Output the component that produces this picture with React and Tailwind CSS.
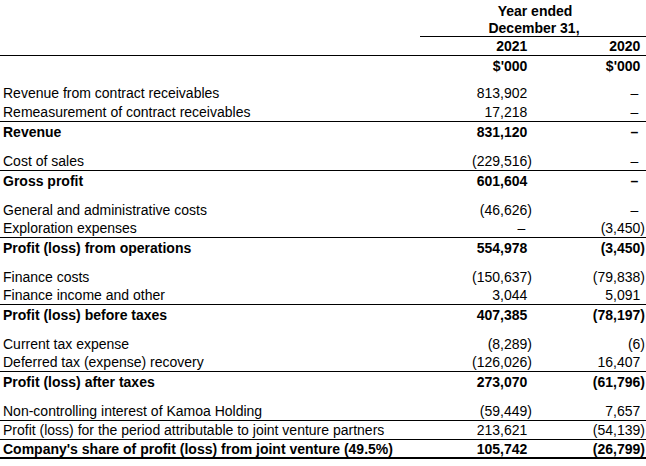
import React from "react";

const P = () => <span className="invisible">)</span>;

function Num({ v, bold }) {
  if (v === "-") {
    return (
      <span className={bold ? "font-bold" : ""}>
        –<span className="inline-block w-[2px]" />
        <P />
      </span>
    );
  }
  if (v.startsWith("(")) return <span>{v}</span>;
  return (
    <span>
      {v}
      <P />
    </span>
  );
}

function Row({ label, a, b, bold, h = "h-[19px]", border = "" }) {
  return (
    <div
      className={`grid grid-cols-[420px_113px_113px] items-center ${h} ${border} ${
        bold ? "font-bold" : ""
      }`}
    >
      <div className="pl-[3px] whitespace-nowrap">{label}</div>
      <div className="text-right pr-[1px]">
        <Num v={a} bold={bold} />
      </div>
      <div className="text-right pr-[1px]">
        <Num v={b} bold={bold} />
      </div>
    </div>
  );
}

const Spacer = ({ h = "h-[10px]" }) => <div className={h} />;

export default function App() {
  return (
    <div
      className="w-[646px] h-[466px] bg-white text-black text-[14px] leading-none overflow-hidden"
      style={{ fontFamily: '"Liberation Sans", Arial, sans-serif' }}
    >
      {/* header */}
      <div className="grid grid-cols-[420px_226px] font-bold">
        <div />
        <div className="h-[19px] flex items-end justify-center pb-[1px] pl-[4px]">Year ended</div>
      </div>
      <div className="grid grid-cols-[420px_226px] font-bold">
        <div />
        <div className="h-[18px] flex items-center justify-center pl-[2px] border-b border-black">
          December 31,
        </div>
      </div>
      <div className="grid grid-cols-[420px_113px_113px] items-center h-[19px] border-b border-black font-bold">
        <div />
        <div className="text-right pr-[1px]">
          2021
          <P />
        </div>
        <div className="text-right pr-[1px]">
          2020
          <P />
        </div>
      </div>
      <div className="grid grid-cols-[420px_113px_113px] items-center h-[19px] font-bold">
        <div />
        <div className="text-right pr-[1px]">
          $'000
          <P />
        </div>
        <div className="text-right pr-[1px]">
          $'000
          <P />
        </div>
      </div>
      <Spacer h="h-[8px]" />

      <Row label="Revenue from contract receivables" a="813,902" b="-" />
      <Row
        label="Remeasurement of contract receivables"
        a="17,218"
        b="-"
        h="h-[20px]"
        border="border-b border-black"
      />
      <Row label="Revenue" a="831,120" b="-" bold />
      <Spacer />

      <Row label="Cost of sales" a="(229,516)" b="-" h="h-[20px]" border="border-b border-black" />
      <Row label="Gross profit" a="601,604" b="-" bold />
      <Spacer />

      <Row label="General and administrative costs" a="(46,626)" b="-" />
      <Row label="Exploration expenses" a="-" b="(3,450)" border="border-b border-black" />
      <Row label="Profit (loss) from operations" a="554,978" b="(3,450)" bold />
      <Spacer />

      <Row label="Finance costs" a="(150,637)" b="(79,838)" />
      <Row label="Finance income and other" a="3,044" b="5,091" border="border-b border-black" />
      <Row label="Profit (loss) before taxes" a="407,385" b="(78,197)" bold />
      <Spacer />

      <Row label="Current tax expense" a="(8,289)" b="(6)" />
      <Row
        label="Deferred tax (expense) recovery"
        a="(126,026)"
        b="16,407"
        border="border-b border-black"
      />
      <Row label="Profit (loss) after taxes" a="273,070" b="(61,796)" bold />
      <Spacer />

      <Row
        label="Non-controlling interest of Kamoa Holding"
        a="(59,449)"
        b="7,657"
        h="h-[20px]"
        border="border-b border-black"
      />
      <Row
        label="Profit (loss) for the period attributable to joint venture partners"
        a="213,621"
        b="(54,139)"
        border="border-b border-black"
      />
      <Row
        label="Company's share of profit (loss) from joint venture (49.5%)"
        a="105,742"
        b="(26,799)"
        bold
        border="border-b-2 border-black"
      />
    </div>
  );
}
